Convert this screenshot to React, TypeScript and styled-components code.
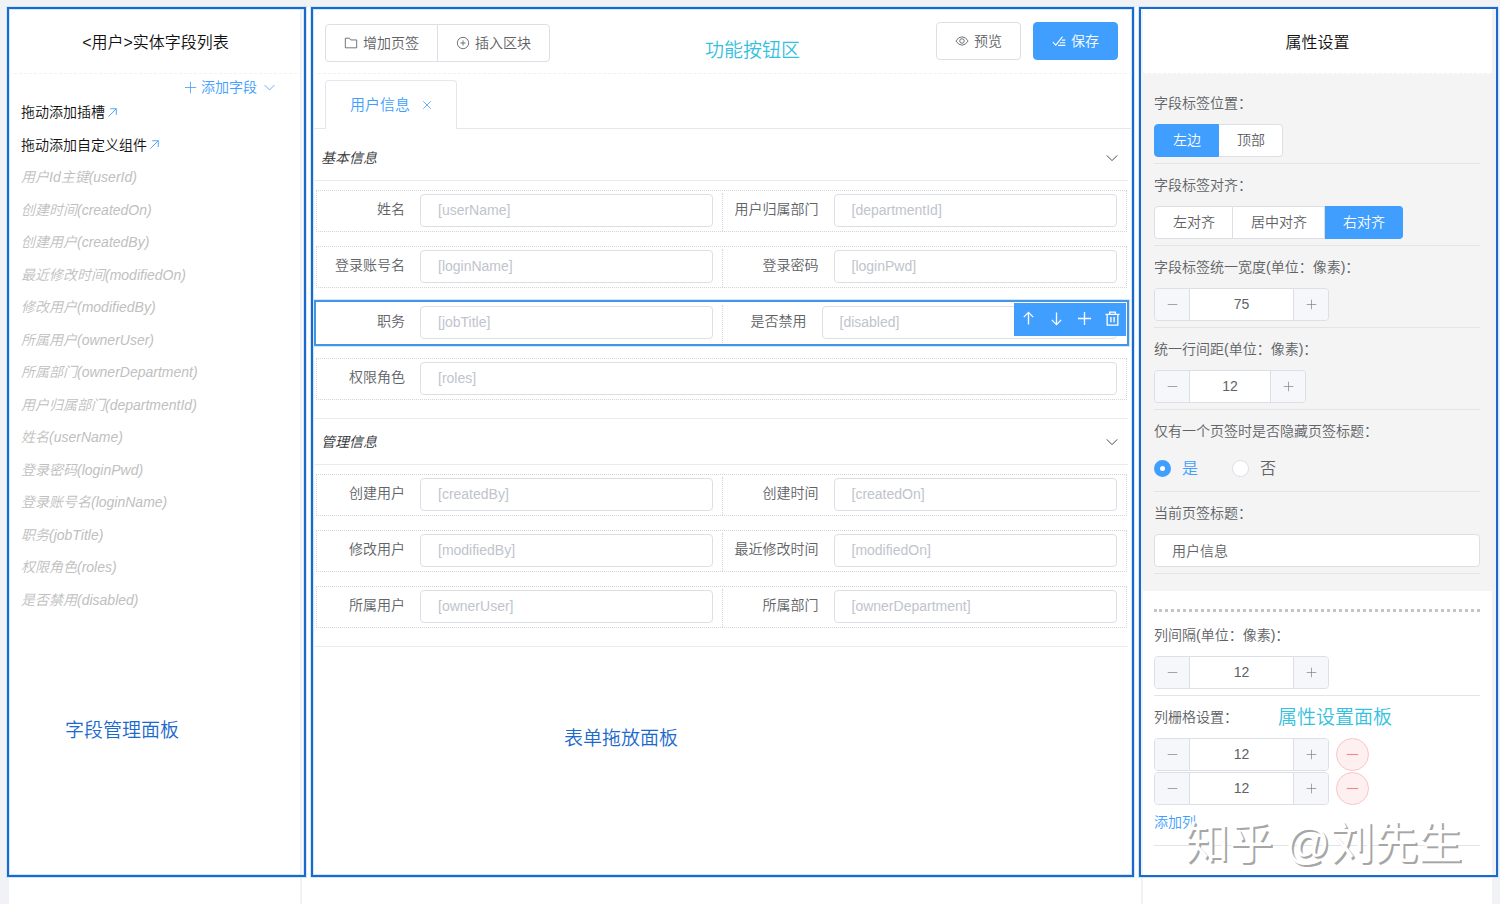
import React, { useState } from "react";
import styled, { createGlobalStyle, css } from "styled-components";

const c = {
  blue: "#409eff",
  frame: "#1c69cc",
  halo: "#cfe6fb",
  gutter: "#f0f2f5",
  line: "#ebebeb",
  border: "#dcdfe6",
  text: "#606266",
  faint: "#c0c0c0",
  cyan: "#35bfe0",
};

const GlobalStyle = createGlobalStyle`
  *, *::before, *::after { box-sizing: border-box; }
  body { margin: 0; background: #fff; }
  body, button, input {
    font-family: "Liberation Sans", "Noto Sans CJK SC", sans-serif;
    font-size: 14px;
    font-weight: 350;
    line-height: 20px;
    color: ${c.text};
  }
  h1, h2, ul, p, fieldset, legend { margin: 0; padding: 0; border: 0; font-weight: inherit; }
  ul { list-style: none; }
  button { margin: 0; padding: 0; border: 0; background: none; color: inherit; cursor: pointer; }
  svg { display: block; flex: none; }
`;

const Page = styled.div`
  display: grid;
  grid-template-columns: 299px minmax(0, 1fr) 359px;
  gap: 5px;
  min-height: 100vh;
  padding: 7px 2px 27px 7px;
  background:
    linear-gradient(${c.gutter}, ${c.gutter}) left top / 100% 7px no-repeat,
    linear-gradient(${c.gutter}, ${c.gutter}) left top / 9px 100% no-repeat,
    linear-gradient(${c.gutter}, ${c.gutter}) right top / 8px 100% no-repeat,
    linear-gradient(${c.gutter}, ${c.gutter}) left 300px top / 2px 100% no-repeat,
    linear-gradient(${c.gutter}, ${c.gutter}) right 357px top / 2px 100% no-repeat,
    #fff;
`;

const Frame = styled.section`
  position: relative;
  display: flex;
  flex-direction: column;
  border: 2px solid ${c.frame};
  box-shadow: 0 0 0 1px ${c.halo}, inset 0 0 0 1px ${c.halo};
`;

const SidePanel = styled(Frame)`
  padding: 0 2px 0 0;
`;

const SettingsFrame = styled(Frame)`
  padding: 0 4px 0 2px;
`;

const Note = styled.p<{ $left: number; $top: number; $color: string }>`
  position: absolute;
  left: ${(p) => p.$left}px;
  top: ${(p) => p.$top}px;
  font-size: 19px;
  line-height: 28px;
  white-space: nowrap;
  color: ${(p) => p.$color};
`;

const PanelTitle = styled.h2`
  height: 65px;
  border-bottom: 1px dashed #f2f2f2;
  text-align: center;
  font-size: 16px;
  line-height: 68px;
  color: #111;
`;

/* Field list */

const AddRow = styled.div`
  display: flex;
  justify-content: flex-end;
  height: 22px;
  padding: 2px 26px 0 0;
`;

const AddButton = styled.button`
  display: flex;
  align-items: center;
  gap: 4px;
  height: 22px;
  color: ${c.blue};
`;

const AddText = styled.span`
  margin-right: 2px;
`;

const FieldList = styled.ul`
  display: grid;
  grid-auto-rows: 1fr;
  height: 520px;
  padding-left: 12px;
`;

const FieldItem = styled.li<{ $used?: boolean }>`
  display: flex;
  align-items: center;
  gap: 2px;
  color: #111;
  white-space: nowrap;
  ${(p) => p.$used && css`
    color: ${c.faint};
    font-style: italic;
  `}
  svg { color: ${c.blue}; }
`;

/* Designer */

const Toolbar = styled.header`
  display: flex;
  justify-content: space-between;
  align-items: flex-start;
  height: 65px;
  padding: 13px 14px 0 12px;
  border-bottom: 1px dashed #f0f0f0;
`;

const ButtonGroup = styled.div`
  display: flex;
  padding-top: 2px;
`;

const Actions = styled.div`
  display: flex;
  gap: 12px;
`;

const Button = styled.button<{ $primary?: boolean }>`
  display: flex;
  align-items: center;
  gap: 5px;
  height: 38px;
  padding: 0 18px;
  border: 1px solid ${(p) => (p.$primary ? c.blue : c.border)};
  border-radius: 4px;
  background: ${(p) => (p.$primary ? c.blue : "#fff")};
  color: ${(p) => (p.$primary ? "#fff" : c.text)};
  ${ButtonGroup} &:first-child { border-radius: 4px 0 0 4px; }
  ${ButtonGroup} &:last-child { border-radius: 0 4px 4px 0; margin-left: -1px; }
`;

const TabBar = styled.div`
  display: flex;
  height: 55px;
  padding: 6px 12px 0;
  border-bottom: 1px solid #e4e7ed;
`;

const Tab = styled.div`
  display: flex;
  align-items: center;
  gap: 12px;
  height: 49px;
  padding: 0 24px;
  border: 1px solid #e4e7ed;
  border-bottom: 0;
  border-radius: 4px 4px 0 0;
  background: #fff;
  font-size: 15px;
  color: ${c.blue};
`;

const TabBody = styled.div`
  padding: 6px 4px 0 0;
`;

const BlockHeader = styled.div`
  display: flex;
  justify-content: space-between;
  align-items: center;
  height: 46px;
  padding: 0 9px 0 8px;
  border-bottom: 1px solid ${c.line};
  font-style: italic;
  color: #303133;
`;

const BlockBody = styled.div`
  display: grid;
  gap: 14px;
  padding: 9px 1px 18px 3px;
  border-bottom: 1px solid ${c.line};
`;

const FormRow = styled.div<{ $selected?: boolean }>`
  position: relative;
  display: grid;
  grid-auto-flow: column;
  grid-auto-columns: minmax(0, 1fr);
  height: 42px;
  border: 1px dotted #d4d4d4;
  ${(p) => p.$selected && css`
    border-color: transparent;
    outline: 2px solid #4496e3;
    box-shadow: 0 0 0 3px ${c.halo};
  `}
`;

const FormCell = styled.div`
  display: flex;
  min-width: 0;
  padding: 3px 9px 0 0;
  & + & {
    margin-top: 2px;
    padding: 1px 9px 0 8px;
    border-left: 1px dotted #d4d4d4;
  }
`;

const CellLabel = styled.label<{ $narrow?: boolean }>`
  flex: none;
  width: ${(p) => (p.$narrow ? 91 : 103)}px;
  padding-right: 15px;
  line-height: 31px;
  text-align: right;
  white-space: nowrap;
`;

const TextInput = styled.input`
  flex: 1;
  min-width: 0;
  width: 100%;
  height: 33px;
  padding: 0 17px 1px;
  border: 1px solid ${c.border};
  border-radius: 4px;
  background: #fff;
  outline: 0;
  &::placeholder { color: #c0c4cc; opacity: 1; }
`;

const RowTools = styled.div`
  position: absolute;
  right: 0;
  top: 0;
  display: flex;
  height: 33px;
  padding-bottom: 2px;
  background: ${c.blue};
  color: #fff;
`;

const ToolButton = styled.button`
  display: flex;
  align-items: center;
  justify-content: center;
  width: 28px;
`;

/* Settings */

const Settings = styled.div`
  flex: 1;
  background: #fff;
  box-shadow: 4px 0 0 ${c.gutter}, -2px 0 0 ${c.gutter};
`;

const GreyArea = styled.div`
  padding: 8px 12px 17px 11px;
  background: #f4f4f4;
`;

const WhiteArea = styled.div`
  padding: 18px 12px 0 11px;
`;

const Dots = styled.div`
  height: 5px;
  border-top: 3px dotted #c4c4c4;
`;

const Setting = styled.fieldset`
  min-width: 0;
  padding: 11px 0 6px;
  border-bottom: 1px solid #e4e4e4;
`;

const SettingLabel = styled.div`
  display: block;
  margin-bottom: 11px;
  height: 20px;
  white-space: nowrap;
`;

const TitleField = styled.div`
  display: flex;
`;

const Segments = styled.div`
  display: flex;
  height: 33px;
`;

const Segment = styled.label<{ $on: boolean }>`
  padding: 0 17px 0 18px;
  border: 1px solid ${(p) => (p.$on ? c.blue : c.border)};
  border-left-width: 0;
  background: ${(p) => (p.$on ? c.blue : "#fff")};
  color: ${(p) => (p.$on ? "#fff" : c.text)};
  line-height: 31px;
  cursor: pointer;
  &:first-child { border-left-width: 1px; border-radius: 4px 0 0 4px; }
  &:last-child { border-radius: 0 4px 4px 0; }
  input { position: absolute; opacity: 0; pointer-events: none; }
`;

const StepperBox = styled.div<{ $small?: boolean }>`
  display: flex;
  width: ${(p) => (p.$small ? 152 : 175)}px;
  height: 33px;
  border: 1px solid ${c.border};
  border-radius: 4px;
  overflow: hidden;
`;

const StepButton = styled.button`
  display: flex;
  align-items: center;
  justify-content: center;
  width: 34px;
  flex: none;
  background: #f5f7fa;
  color: #7a7d83;
`;

const StepInput = styled.input`
  flex: 1;
  min-width: 0;
  padding: 0 0 1px;
  border: 0;
  border-left: 1px solid ${c.border};
  border-right: 1px solid ${c.border};
  background: #fff;
  text-align: center;
  outline: 0;
`;

const RadioRow = styled.div`
  display: flex;
  align-items: center;
  gap: 34px;
  height: 33px;
`;

const RadioLabel = styled.label<{ $on: boolean }>`
  display: flex;
  align-items: center;
  gap: 11px;
  font-size: 16px;
  color: ${(p) => (p.$on ? c.blue : c.text)};
`;

const Radio = styled.input`
  appearance: none;
  width: 17px;
  height: 17px;
  margin: 0;
  border: 1px solid ${c.border};
  border-radius: 50%;
  background: #fff;
  &:checked {
    border: 6px solid ${c.blue};
  }
`;

const ColumnRow = styled.div`
  display: flex;
  gap: 7px;
  margin-bottom: 1px;
`;

const RemoveButton = styled.button`
  display: flex;
  align-items: center;
  justify-content: center;
  width: 33px;
  height: 33px;
  border: 1px solid #fbc4c4;
  border-radius: 50%;
  background: #fef0f0;
  color: #f08a8a;
`;

const AddColumn = styled.button`
  display: block;
  margin: 7px 0;
  color: ${c.blue};
`;

const Watermark = styled.p`
  position: absolute;
  right: 34px;
  bottom: 0;
  font-size: 44px;
  line-height: 62px;
  font-weight: 400;
  white-space: nowrap;
  color: #fff;
  text-shadow: 2px 2px 0 #a6a6a6;
`;

/* Icons */

const shapes = {
  folder: "M1.5 2.5h4.6l1.6 2h6.8v9h-13z",
  circlePlus: "M8 1.5a6.5 6.5 0 1 0 0 13a6.5 6.5 0 1 0 0-13zM8 5v6M5 8h6",
  eye: "M1 8q3-4.8 7-4.8T15 8q-3 4.8-7 4.8T1 8zM8 5.4a2.6 2.6 0 1 0 0 5.2a2.6 2.6 0 1 0 0-5.2z",
  finished: "M1 9.3l3.4 3.4L12 3M11.2 7h4M9.2 10h6M7 13h8.2",
  plus: "M8 1v14M1 8h14",
  minus: "M1 8h14",
  down: "M2 5l6 6l6-6",
  topRight: "M2 14L13.5 2.5M4.5 2.5h9v9",
  close: "M2 2l12 12M14 2L2 14",
  arrowUp: "M8 14.5v-13M3 6.5l5-5l5 5",
  arrowDown: "M8 1.5v13M3 9.5l5 5l5-5",
  trash: "M.5 3.5h15M5 3.5v-2.3h6v2.3M2.3 3.5v11.5h11.4v-11.5M6.3 6.5v5.5M9.7 6.5v5.5",
};

function Icon({ name, size = 14, stroke = 1 }: { name: keyof typeof shapes; size?: number; stroke?: number }) {
  return (
    <svg width={size} height={size} viewBox="0 0 16 16" fill="none" stroke="currentColor" strokeWidth={stroke} aria-hidden="true">
      <path d={shapes[name]} />
    </svg>
  );
}

/* Data */

const dragItems = ["拖动添加插槽", "拖动添加自定义组件"];

const usedFields = [
  "用户Id主键(userId)",
  "创建时间(createdOn)",
  "创建用户(createdBy)",
  "最近修改时间(modifiedOn)",
  "修改用户(modifiedBy)",
  "所属用户(ownerUser)",
  "所属部门(ownerDepartment)",
  "用户归属部门(departmentId)",
  "姓名(userName)",
  "登录密码(loginPwd)",
  "登录账号名(loginName)",
  "职务(jobTitle)",
  "权限角色(roles)",
  "是否禁用(disabled)",
];

type Field = { label: string; name: string };
type Block = { title: string; rows: Field[][] };

const blocks: Block[] = [
  {
    title: "基本信息",
    rows: [
      [{ label: "姓名", name: "userName" }, { label: "用户归属部门", name: "departmentId" }],
      [{ label: "登录账号名", name: "loginName" }, { label: "登录密码", name: "loginPwd" }],
      [{ label: "职务", name: "jobTitle" }, { label: "是否禁用", name: "disabled" }],
      [{ label: "权限角色", name: "roles" }],
    ],
  },
  {
    title: "管理信息",
    rows: [
      [{ label: "创建用户", name: "createdBy" }, { label: "创建时间", name: "createdOn" }],
      [{ label: "修改用户", name: "modifiedBy" }, { label: "最近修改时间", name: "modifiedOn" }],
      [{ label: "所属用户", name: "ownerUser" }, { label: "所属部门", name: "ownerDepartment" }],
    ],
  },
];

const rowTools = [
  { icon: "arrowUp", label: "上移" },
  { icon: "arrowDown", label: "下移" },
  { icon: "plus", label: "添加" },
  { icon: "trash", label: "删除" },
] as const;

/* Controls */

function SegmentPicker({ name, options, initial }: { name: string; options: string[]; initial: string }) {
  const [value, setValue] = useState(initial);
  return (
    <Segments>
      {options.map((o) => (
        <Segment key={o} $on={o === value}>
          <input type="radio" name={name} checked={o === value} onChange={() => setValue(o)} />
          {o}
        </Segment>
      ))}
    </Segments>
  );
}

function Stepper({ label, initial, small }: { label: string; initial: number; small?: boolean }) {
  const [value, setValue] = useState(initial);
  return (
    <StepperBox $small={small}>
      <StepButton type="button" aria-label="减少" onClick={() => setValue(value - 1)}>
        <Icon name="minus" size={11} />
      </StepButton>
      <StepInput aria-label={label} value={value} onChange={(e) => setValue(Number(e.target.value) || 0)} />
      <StepButton type="button" aria-label="增加" onClick={() => setValue(value + 1)}>
        <Icon name="plus" size={11} />
      </StepButton>
    </StepperBox>
  );
}

function YesNo() {
  const [value, setValue] = useState("是");
  return (
    <RadioRow>
      {["是", "否"].map((o) => (
        <RadioLabel key={o} $on={o === value}>
          <Radio type="radio" name="hideTab" checked={o === value} onChange={() => setValue(o)} />
          {o}
        </RadioLabel>
      ))}
    </RadioRow>
  );
}

function FormBlock({ block, selected }: { block: Block; selected: string }) {
  return (
    <>
      <BlockHeader>
        <span>{block.title}</span>
        <Icon name="down" size={14} />
      </BlockHeader>
      <BlockBody>
        {block.rows.map((row) => {
          const active = row[0].name === selected;
          return (
            <FormRow key={row[0].name} $selected={active}>
              {row.map((f, i) => (
                <FormCell key={f.name}>
                  <CellLabel htmlFor={f.name} $narrow={i === 1 && active}>
                    {f.label}
                  </CellLabel>
                  <TextInput id={f.name} placeholder={`[${f.name}]`} />
                </FormCell>
              ))}
              {active && (
                <RowTools role="toolbar">
                  {rowTools.map((t) => (
                    <ToolButton key={t.icon} type="button" aria-label={t.label}>
                      <Icon name={t.icon} size={15} stroke={1.4} />
                    </ToolButton>
                  ))}
                </RowTools>
              )}
            </FormRow>
          );
        })}
      </BlockBody>
    </>
  );
}

export default function App() {
  const [tabTitle, setTabTitle] = useState("用户信息");
  return (
    <>
      <GlobalStyle />
      <Page>
        <SidePanel>
          <PanelTitle>&lt;用户&gt;实体字段列表</PanelTitle>
          <AddRow>
            <AddButton type="button">
              <Icon name="plus" size={13} />
              <AddText>添加字段</AddText>
              <Icon name="down" size={13} />
            </AddButton>
          </AddRow>
          <FieldList>
            {dragItems.map((d) => (
              <FieldItem key={d}>
                {d}
                <Icon name="topRight" size={11} stroke={1.3} />
              </FieldItem>
            ))}
            {usedFields.map((f) => (
              <FieldItem key={f} $used>
                {f}
              </FieldItem>
            ))}
          </FieldList>
          <Note $left={56} $top={708} $color={c.frame}>字段管理面板</Note>
        </SidePanel>

        <Frame>
          <Toolbar>
            <ButtonGroup>
              <Button type="button">
                <Icon name="folder" />
                增加页签
              </Button>
              <Button type="button">
                <Icon name="circlePlus" />
                插入区块
              </Button>
            </ButtonGroup>
            <Actions>
              <Button type="button">
                <Icon name="eye" />
                预览
              </Button>
              <Button type="button" $primary>
                <Icon name="finished" stroke={1.2} />
                保存
              </Button>
            </Actions>
          </Toolbar>
          <TabBar>
            <Tab>
              {tabTitle}
              <button type="button" aria-label="关闭页签">
                <Icon name="close" size={10} stroke={1.3} />
              </button>
            </Tab>
          </TabBar>
          <TabBody>
            {blocks.map((b) => (
              <FormBlock key={b.title} block={b} selected="jobTitle" />
            ))}
          </TabBody>
          <Note $left={392} $top={28} $color={c.cyan}>功能按钮区</Note>
          <Note $left={251} $top={716} $color={c.frame}>表单拖放面板</Note>
        </Frame>

        <SettingsFrame>
          <Settings>
            <PanelTitle>属性设置</PanelTitle>
            <GreyArea>
              <Setting>
                <SettingLabel>字段标签位置：</SettingLabel>
                <SegmentPicker name="labelPosition" options={["左边", "顶部"]} initial="左边" />
              </Setting>
              <Setting>
                <SettingLabel>字段标签对齐：</SettingLabel>
                <SegmentPicker name="labelAlign" options={["左对齐", "居中对齐", "右对齐"]} initial="右对齐" />
              </Setting>
              <Setting>
                <SettingLabel>字段标签统一宽度(单位：像素)：</SettingLabel>
                <Stepper label="字段标签统一宽度" initial={75} />
              </Setting>
              <Setting>
                <SettingLabel>统一行间距(单位：像素)：</SettingLabel>
                <Stepper label="统一行间距" initial={12} small />
              </Setting>
              <Setting>
                <SettingLabel>仅有一个页签时是否隐藏页签标题：</SettingLabel>
                <YesNo />
              </Setting>
              <Setting>
                <SettingLabel as="label" htmlFor="tabTitle">当前页签标题：</SettingLabel>
                <TitleField>
                  <TextInput id="tabTitle" value={tabTitle} onChange={(e) => setTabTitle(e.target.value)} />
                </TitleField>
              </Setting>
            </GreyArea>
            <WhiteArea>
              <Dots />
              <Setting>
                <SettingLabel>列间隔(单位：像素)：</SettingLabel>
                <Stepper label="列间隔" initial={12} />
              </Setting>
              <Setting>
                <SettingLabel>列栅格设置：</SettingLabel>
                {[1, 2].map((n) => (
                  <ColumnRow key={n}>
                    <Stepper label={`第${n}列栅格`} initial={12} />
                    <RemoveButton type="button" aria-label={`删除第${n}列`}>
                      <Icon name="minus" size={13} stroke={1.4} />
                    </RemoveButton>
                  </ColumnRow>
                ))}
                <AddColumn type="button">添加列</AddColumn>
              </Setting>
            </WhiteArea>
          </Settings>
          <Note $left={137} $top={695} $color={c.cyan}>属性设置面板</Note>
          <Watermark>知乎 @刘先生</Watermark>
        </SettingsFrame>
      </Page>
    </>
  );
}
